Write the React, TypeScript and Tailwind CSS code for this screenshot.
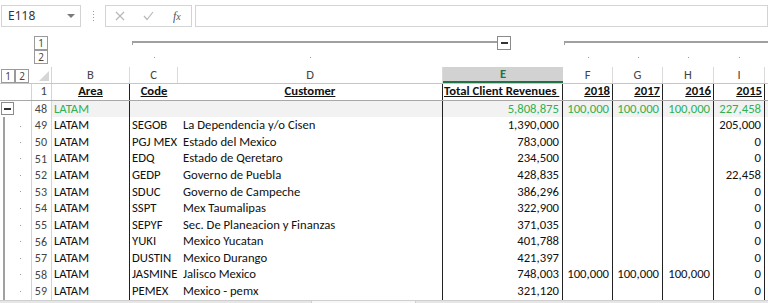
import React from "react";

const F = { fontFamily: "Carlito, Lato, 'Liberation Sans', sans-serif" };
const UI = { fontFamily: "'Noto Sans', 'Open Sans', sans-serif" };

type Row = {
  n: number;
  area: string;
  code: string;
  cust: string;
  e: string;
  f: string;
  g: string;
  h: string;
  i: string;
  sum?: boolean;
};

const rows: Row[] = [
  { n: 48, area: "LATAM", code: "", cust: "", e: "5,808,875", f: "100,000", g: "100,000", h: "100,000", i: "227,458", sum: true },
  { n: 49, area: "LATAM", code: "SEGOB", cust: "La Dependencia y/o Cisen", e: "1,390,000", f: "", g: "", h: "", i: "205,000" },
  { n: 50, area: "LATAM", code: "PGJ MEX", cust: "Estado del Mexico", e: "783,000", f: "", g: "", h: "", i: "0" },
  { n: 51, area: "LATAM", code: "EDQ", cust: "Estado de Qeretaro", e: "234,500", f: "", g: "", h: "", i: "0" },
  { n: 52, area: "LATAM", code: "GEDP", cust: "Governo de Puebla", e: "428,835", f: "", g: "", h: "", i: "22,458" },
  { n: 53, area: "LATAM", code: "SDUC", cust: "Governo de Campeche", e: "386,296", f: "", g: "", h: "", i: "0" },
  { n: 54, area: "LATAM", code: "SSPT", cust: "Mex Taumalipas", e: "322,900", f: "", g: "", h: "", i: "0" },
  { n: 55, area: "LATAM", code: "SEPYF", cust: "Sec. De Planeacion y Finanzas", e: "371,035", f: "", g: "", h: "", i: "0" },
  { n: 56, area: "LATAM", code: "YUKI", cust: "Mexico Yucatan", e: "401,788", f: "", g: "", h: "", i: "0" },
  { n: 57, area: "LATAM", code: "DUSTIN", cust: "Mexico Durango", e: "421,397", f: "", g: "", h: "", i: "0" },
  { n: 58, area: "LATAM", code: "JASMINE", cust: "Jalisco Mexico", e: "748,003", f: "100,000", g: "100,000", h: "100,000", i: "0" },
  { n: 59, area: "LATAM", code: "PEMEX", cust: "Mexico - pemx", e: "321,120", f: "", g: "", h: "", i: "0" },
];

function OutlineBtn({ children }: { children: React.ReactNode }) {
  return (
    <div className="w-[14px] h-[14px] border border-[#9a9a9a] bg-white flex items-center justify-center text-[10px] leading-none text-[#444]" style={UI}>
      {children}
    </div>
  );
}

function Dot() {
  return <div className="w-[1px] h-[1px] bg-[#9a9a9a]" />;
}

export default function App() {
  return (
    <div className="w-[768px] h-[303px] overflow-hidden bg-white relative text-[#111]" style={F}>
      {/* Formula bar */}
      <div className="h-[31px] flex items-start pt-[5px]">
        <div className="ml-[1px] w-[80px] h-[22px] border border-[#d4d4d4] flex items-center justify-between pl-[6px] pr-[5px]">
          <span className="text-[12px] text-[#333]" style={UI}>E118</span>
          <svg width="8" height="5" viewBox="0 0 8 5"><path d="M0 0 L8 0 L4 4 Z" fill="#7a7a7a" /></svg>
        </div>
        <div className="w-[24px] h-[22px] flex flex-col items-center justify-center gap-[2px]">
          <Dot /><Dot /><Dot /><Dot />
        </div>
        <div className="w-[87px] h-[22px] border border-[#d4d4d4] flex items-center">
          <div className="w-[29px] flex justify-center">
            <svg width="10" height="10" viewBox="0 0 10 10"><path d="M1 1 L9 9 M9 1 L1 9" stroke="#b8b8b8" strokeWidth="1.2" /></svg>
          </div>
          <div className="w-[29px] flex justify-center">
            <svg width="11" height="10" viewBox="0 0 11 10"><path d="M1 5 L4 8.5 L10 1" stroke="#b8b8b8" strokeWidth="1.2" fill="none" /></svg>
          </div>
          <div className="w-[29px] flex justify-center items-end text-[12px] italic text-[#555] leading-none" style={{ fontFamily: "'Liberation Serif', serif" }}>
            <span>f</span><span className="text-[10px]">x</span>
          </div>
        </div>
        <div className="ml-[3px] flex-1 h-[22px] border border-[#d4d4d4]" />
      </div>

      {/* Outline band */}
      <div className="h-[36px] flex">
        <div className="w-[31px]" />
        <div className="w-[21px] flex flex-col pl-[3px] pt-[5px]">
          <OutlineBtn>1</OutlineBtn>
          <OutlineBtn>2</OutlineBtn>
        </div>
        <div className="w-[78px]" />
        {/* C */}
        <div className="w-[48px] flex flex-col">
          <div className="mt-[10px] ml-[2px] h-[4px] border-t-2 border-l border-[#a0a0a0]" />
          <div className="mt-[12px] flex justify-center"><Dot /></div>
        </div>
        {/* D */}
        <div className="w-[265px] flex flex-col">
          <div className="mt-[10px] h-[2px] bg-[#a0a0a0]" />
          <div className="mt-[14px] flex justify-center"><Dot /></div>
        </div>
        {/* E */}
        <div className="w-[120px] flex items-start">
          <div className="mt-[10px] w-[54px] h-[2px] bg-[#a0a0a0]" />
          <div className="mt-[5px] w-[14px] h-[14px] border border-[#8a8a8a] bg-white flex items-center justify-center">
            <div className="w-[7px] h-[2px] bg-[#333]" />
          </div>
        </div>
        {/* F */}
        <div className="w-[50px] flex flex-col">
          <div className="mt-[10px] ml-[1px] h-[4px] border-t-2 border-l border-[#a0a0a0]" />
          <div className="mt-[12px] flex justify-center"><Dot /></div>
        </div>
        {[50, 51, 51].map((w, k) => (
          <div key={k} className="flex flex-col" style={{ width: w }}>
            <div className="mt-[10px] h-[2px] bg-[#a0a0a0]" />
            <div className="mt-[14px] flex justify-center"><Dot /></div>
          </div>
        ))}
        <div className="flex-1 flex flex-col">
          <div className="mt-[10px] h-[2px] bg-[#a0a0a0]" />
        </div>
      </div>

      {/* Column header row */}
      <div className="h-[17px] flex border-b border-[#c6c6c6] text-[12.5px] text-[#444]">
        <div className="w-[31px] flex items-center pl-[1px] pt-[1px]">
          <OutlineBtn>1</OutlineBtn>
          <OutlineBtn>2</OutlineBtn>
        </div>
        <div className="w-[21px] border-r border-[#d4d4d4] flex items-end justify-end pr-[2px] pb-[2px]">
          <svg width="10" height="10" viewBox="0 0 10 10"><path d="M10 0 L10 10 L0 10 Z" fill="#d6d6d6" /></svg>
        </div>
        <div className="w-[78px] border-r border-[#dadada] flex items-center justify-center">B</div>
        <div className="w-[48px] border-r border-[#dadada] flex items-center justify-center">C</div>
        <div className="w-[265px] border-r border-[#dadada] flex items-center justify-center">D</div>
        <div className="w-[120px] bg-[#d2d2d2] border-b-2 border-[#217346] flex items-center justify-center font-bold text-[#217346]">E</div>
        <div className="w-[50px] border-r border-[#dadada] flex items-center justify-center">F</div>
        <div className="w-[50px] border-r border-[#dadada] flex items-center justify-center">G</div>
        <div className="w-[51px] border-r border-[#dadada] flex items-center justify-center">H</div>
        <div className="w-[51px] border-r border-[#dadada] flex items-center justify-center">I</div>
        <div className="flex-1" />
      </div>

      {/* Row 1 */}
      <div className="h-[16.6px] flex text-[12.7px] leading-none border-b border-[#a8a8a8]">
        <div className="w-[31px]" />
        <div className="w-[21px] border-l border-r border-[#d4d4d4] flex items-center justify-end pr-[4px] text-[#444]">1</div>
        <div className="w-[78px] border-r border-[#222] flex items-center justify-center font-bold underline">Area</div>
        <div className="w-[48px] flex items-center justify-center font-bold underline">Code</div>
        <div className="w-[265px] border-r border-[#222] flex items-center justify-center font-bold underline">Customer</div>
        <div className="w-[120px] border-r border-[#222] flex items-center pl-[1px] font-bold underline whitespace-pre overflow-hidden">Total Client Revenues </div>
        <div className="w-[50px] border-r border-[#222] flex items-center justify-end pr-[2px] font-bold underline">2018</div>
        <div className="w-[50px] border-r border-[#222] flex items-center justify-end pr-[2px] font-bold underline">2017</div>
        <div className="w-[51px] border-r border-[#222] flex items-center justify-end pr-[2px] font-bold underline">2016</div>
        <div className="w-[51px] border-r border-[#222] flex items-center justify-end pr-[2px] font-bold underline">2015</div>
        <div className="flex-1" />
      </div>

      {rows.map((r) => {
        const txt = r.sum ? "text-[#2fb050]" : "text-[#111]";
        return (
          <div key={r.n} className="h-[16.6px] flex text-[12.7px] leading-none">
            <div className="w-[31px] flex items-center">
              {r.sum ? (
                <div className="ml-[1px] w-[13px] h-[13px] border border-[#8a8a8a] bg-white flex items-center justify-center">
                  <div className="w-[7px] h-[2px] bg-[#333]" />
                </div>
              ) : (
                <div className={`ml-[3px] h-full w-[28px] border-l-2 border-[#a0a0a0] flex items-center ${r.n === 49 ? "pt-[2px]" : ""}`}>
                  <div className="ml-[15px]"><Dot /></div>
                </div>
              )}
            </div>
            <div className="w-[21px] border-l border-r border-[#d4d4d4] flex items-center justify-end pr-[4px] text-[#444] text-[12px]">{r.n}</div>
            <div className={`flex flex-1 ${r.sum ? "bg-[#f2f2f2]" : ""}`}>
              <div className={`w-[78px] border-r border-[#222] flex items-center pl-[2px] ${txt}`}>{r.area}</div>
              <div className="w-[48px] flex items-center pl-[2px] whitespace-nowrap">{r.code}</div>
              <div className="w-[265px] border-r border-[#222] flex items-center pl-[5px] whitespace-nowrap">{r.cust}</div>
              <div className={`w-[120px] border-r border-[#222] flex items-center justify-end pr-[3px] ${txt}`}>{r.e}</div>
              <div className={`w-[50px] border-r border-[#222] flex items-center justify-end pr-[3px] ${txt}`}>{r.f}</div>
              <div className={`w-[50px] border-r border-[#222] flex items-center justify-end pr-[3px] ${txt}`}>{r.g}</div>
              <div className={`w-[51px] border-r border-[#222] flex items-center justify-end pr-[3px] ${txt}`}>{r.h}</div>
              <div className={`w-[51px] border-r border-[#222] flex items-center justify-end pr-[3px] ${txt}`}>{r.i}</div>
              <div className="flex-1" />
            </div>
          </div>
        );
      })}

      {/* bottom strip */}
      <div className="h-[6px] flex bg-[#e6e6e6] border-t border-[#cfcfcf]">
        <div className="w-[311px]" />
        <div className="w-[105px] bg-[#f7f7f7] border-l border-r border-[#cfcfcf]" />
      </div>
    </div>
  );
}
